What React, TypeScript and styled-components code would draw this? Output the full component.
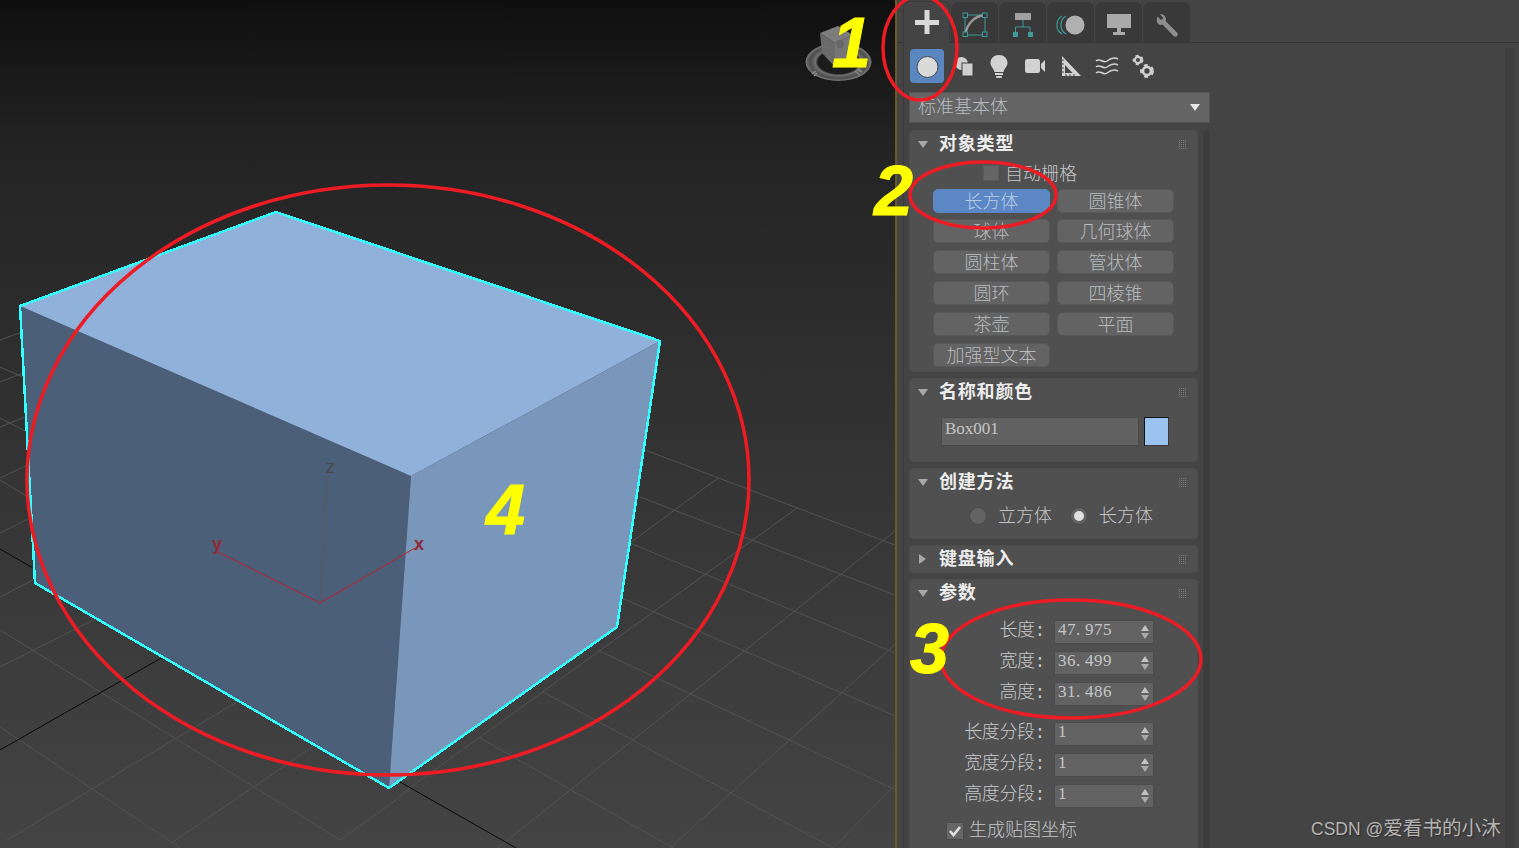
import React from "react";
import styled, { createGlobalStyle } from "styled-components";

const Global = createGlobalStyle`
  html, body { margin: 0; padding: 0; background: #444; overflow: hidden; }
  * { box-sizing: border-box; }
`;

const CJK = `"Noto Sans CJK SC", sans-serif`;
const MONO_CJK = `"Liberation Mono", "Noto Sans CJK SC", monospace`;
const DIGITS = `"Liberation Serif", serif`;

const Page = styled.div`
  position: relative;
  display: flex;
  width: 1519px;
  height: 848px;
  overflow: hidden;
  font-family: ${CJK};
  font-weight: 300;
`;

const Viewport = styled.div`
  flex: 0 0 895px;
  height: 848px;
`;
const ViewportCanvas = styled.svg`
  display: block;
`;

const CommandPanel = styled.div`
  flex: 1;
  display: flex;
  flex-direction: column;
  height: 848px;
  background: #444444;
  border-left: 2px solid #6b5a26;
`;

const TabBar = styled.div`
  display: flex;
  align-items: flex-end;
  gap: 1px;
  height: 43px;
  padding-left: 6px;
  border-bottom: 1px solid #373737;
`;
const Tab = styled.div<{ $active?: boolean }>`
  width: 47px;
  height: ${(p) => (p.$active ? "42px" : "40px")};
  margin-bottom: ${(p) => (p.$active ? "-1px" : "0")};
  border-radius: 7px 7px 0 0;
  background: ${(p) => (p.$active ? "#444444" : "#393939")};
  border: 1px solid ${(p) => (p.$active ? "#3a3a3a" : "transparent")};
  border-bottom: none;
`;
const TabGlyph = styled.svg`
  display: block;
  margin-left: -1px;
`;

const PanelBody = styled.div`
  flex: 1;
  display: flex;
  min-height: 0;
  margin-left: 6px;
  padding-left: 5px;
  border-left: 1px solid #3a3a3a;
`;
const PanelColumn = styled.div`
  display: flex;
  flex-direction: column;
  width: 301px;
`;
const OuterTrack = styled.div`
  width: 10px;
  margin: 5px 4px 0 auto;
  background: #3e3e3e;
`;

const CategoryRow = styled.div`
  display: flex;
  gap: 2px;
  height: 34px;
  margin: 6px 0 0 1px;
`;
const CategoryButton = styled.div<{ $active?: boolean }>`
  width: 34px;
  height: 34px;
  border-radius: 4px;
  background: ${(p) => (p.$active ? "#5b87c1" : "transparent")};
`;
const CategoryGlyph = styled.svg`
  display: block;
`;

const Dropdown = styled.div`
  display: flex;
  align-items: center;
  justify-content: space-between;
  height: 31px;
  margin-top: 9px;
  padding: 0 9px 6px 8px;
  background: #656565;
  border: 1px solid #545454;
  color: #b9bdc2;
  font-size: 18px;
`;
const DropdownArrow = styled.span`
  width: 0;
  height: 0;
  margin-top: 6px;
  border-left: 5px solid transparent;
  border-right: 5px solid transparent;
  border-top: 7px solid #e6e6e6;
`;

const RolloutArea = styled.div`
  flex: 1;
  display: flex;
  gap: 5px;
  min-height: 0;
  margin-top: 7px;
`;
const RolloutList = styled.div`
  display: flex;
  flex-direction: column;
  gap: 6px;
  width: 289px;
`;
const InnerTrack = styled.div`
  width: 7px;
  border-radius: 3px 3px 0 0;
  background: #3d3d3d;
`;

const Rollout = styled.section`
  background: #505050;
  border: 1px solid #4d4d4d;
  border-radius: 4px;
`;
const RolloutHeader = styled.header`
  display: flex;
  align-items: center;
  height: 26px;
  padding: 0 10px 0 8px;
`;
const Caret = styled.span<{ $open: boolean }>`
  width: 0;
  height: 0;
  ${(p) =>
    p.$open
      ? `border-left: 5px solid transparent; border-right: 5px solid transparent; border-top: 7px solid #a8a8a8; margin-right: 11px;`
      : `border-top: 5px solid transparent; border-bottom: 5px solid transparent; border-left: 7px solid #a8a8a8; margin: 0 13px 0 1px;`}
`;
const RolloutTitle = styled.h3`
  flex: 1;
  margin: 0 0 3px;
  color: #ececec;
  font-size: 18px;
  font-weight: 700;
  line-height: 23px;
  letter-spacing: 0.8px;
`;
const Grip = styled.span`
  width: 9px;
  height: 9px;
  background: conic-gradient(#7a7a7a 25%, transparent 0) 0 0 / 2px 2px;
`;

const AutoGridRow = styled.div`
  display: flex;
  align-items: center;
  gap: 6px;
  height: 16px;
  margin: 8px 0 0 73px;
  color: #c4c6c8;
  font-size: 18px;
`;
const AutoGridText = styled.span`
  margin-top: -2px;
`;
const SmallBox = styled.span`
  width: 16px;
  height: 16px;
  background: #656565;
  border: 1px solid #5a5a5a;
`;
const ButtonGrid = styled.div`
  display: grid;
  grid-template-columns: 117px 117px;
  grid-template-rows: 23px repeat(5, 24px);
  column-gap: 7px;
  row-gap: 7px;
  margin: 8px 0 4px 23px;
`;
const ObjectButton = styled.div<{ $active?: boolean }>`
  display: flex;
  align-items: center;
  justify-content: center;
  height: 24px;
  padding-bottom: 2px;
  border-radius: 5px;
  border: 1px solid ${(p) => (p.$active ? "#5b87c1" : "#585858")};
  background: ${(p) => (p.$active ? "#5b87c4" : "#636363")};
  color: ${(p) => (p.$active ? "#b9cce4" : "#b9bcbf")};
  font-size: 18px;
  line-height: 20px;
`;

const NameRow = styled.div`
  display: flex;
  gap: 5px;
  margin: 12px 0 15px 31px;
`;
const NameField = styled.div`
  width: 198px;
  height: 29px;
  padding: 0 3px;
  background: #616161;
  border: 1px solid #4a4a4a;
  color: #c6c6c6;
  font-family: ${DIGITS};
  font-size: 17px;
  line-height: 22px;
`;
const ColorSwatch = styled.div`
  width: 25px;
  height: 29px;
  background: #9cc3ef;
  border: 1px solid #3a3a3a;
  border-top-color: #111;
  border-left-color: #111;
`;

const RadioRow = styled.div`
  display: flex;
  align-items: center;
  height: 18px;
  margin: 12px 0 13px 59px;
`;
const RadioOption = styled.div`
  display: flex;
  align-items: center;
  gap: 11px;
  width: 101px;
  color: #c2c4c6;
  font-size: 18px;
`;
const RadioText = styled.span`
  margin-top: -5px;
`;
const RadioDot = styled.span<{ $checked?: boolean }>`
  display: flex;
  align-items: center;
  justify-content: center;
  width: 18px;
  height: 18px;
  border-radius: 50%;
  background: #636363;
  border: 1px solid #4a4a4a;
  &::after {
    content: "";
    width: 10px;
    height: 10px;
    border-radius: 50%;
    background: ${(p) => (p.$checked ? "#e0e0e0" : "transparent")};
  }
`;

const SpinnerGroup = styled.div<{ $first?: boolean }>`
  display: flex;
  flex-direction: column;
  gap: 7px;
  margin-top: ${(p) => (p.$first ? "14px" : "16px")};
`;
const SpinnerRow = styled.div`
  display: flex;
  align-items: center;
  justify-content: flex-end;
  gap: 9px;
  height: 24px;
  padding-right: 43px;
`;
const SpinnerLabel = styled.label`
  padding-bottom: 9px;
  color: #c6c8ca;
  font-family: ${MONO_CJK};
  font-size: 18px;
  letter-spacing: -0.4px;
  white-space: nowrap;
`;
const SpinnerField = styled.div`
  position: relative;
  width: 100px;
  height: 24px;
  padding-left: 3px;
  background: #626262;
  border: 1px solid #4c4c4c;
  color: #c4c6c8;
  font-family: ${DIGITS};
  font-size: 17px;
  line-height: 17px;
  letter-spacing: 0.5px;
`;
const DecimalPoint = styled.span`
  display: inline-block;
  width: 9px;
`;
const SpinnerArrows = styled.span`
  position: absolute;
  top: 4px;
  right: 4px;
  display: flex;
  flex-direction: column;
  gap: 2px;
`;
const SpinUp = styled.i`
  display: block;
  width: 0;
  height: 0;
  border-left: 4px solid transparent;
  border-right: 4px solid transparent;
  border-bottom: 6px solid #c2c2c2;
`;
const SpinDown = styled.i`
  display: block;
  width: 0;
  height: 0;
  border-left: 4px solid transparent;
  border-right: 4px solid transparent;
  border-top: 6px solid #a9a9a9;
`;
const MapRow = styled.div`
  display: flex;
  align-items: center;
  gap: 5px;
  height: 18px;
  margin: 14px 0 20px 36px;
  color: #c4c6c8;
  font-size: 18px;
`;
const MapText = styled.span`
  margin-top: -6px;
`;
const CheckBox = styled.span`
  display: flex;
  align-items: center;
  justify-content: center;
  width: 18px;
  height: 18px;
  background: #666;
  border: 1px solid #4a4a4a;
`;

/* overlays */
const MarkupLayer = styled.svg`
  position: absolute;
  top: 0;
  left: 0;
  pointer-events: none;
`;
const Callout = styled.span<{ $x: number; $y: number }>`
  position: absolute;
  left: ${(p) => p.$x}px;
  top: ${(p) => p.$y}px;
  color: #ffff00;
  font-family: "Liberation Sans", sans-serif;
  font-size: 70px;
  font-style: italic;
  font-weight: 700;
  line-height: 72px;
  -webkit-text-stroke: 1px #ffff00;
`;
const Watermark = styled.span`
  position: absolute;
  left: 1311px;
  top: 814px;
  color: #b4b4b4;
  font-family: "Liberation Sans", "Noto Sans CJK SC", sans-serif;
  font-size: 19.6px;
  font-weight: 400;
  line-height: 28px;
  text-shadow: 1px 1px 1px #2c2c2c;
  white-space: nowrap;
`;
const WatermarkLatin = styled.span`
  font-size: 17.5px;
`;

const gridLines: number[][] = [
  // right, down-right family
  [617, 596, 900, 718], [630, 543, 900, 655], [640, 497, 900, 597], [645, 450, 900, 547],
  [597, 650, 900, 792], [543, 692, 833, 848], [480, 738, 673, 848],
  // right, up-right family
  [490, 854, 900, 527], [400, 795, 797, 508], [630, 543, 718, 478],
  [670, 848, 900, 640], [833, 848, 900, 780],
  // left
  [0, 340, 22, 332], [0, 367, 23, 377], [0, 382, 23, 373], [0, 418, 27, 432], [0, 427, 25, 417],
  [0, 478, 28, 465], [0, 480, 28, 497], [0, 533, 30, 518], [0, 597, 33, 580],
  [0, 630, 340, 840], [0, 727, 180, 848], [7, 840, 320, 652], [173, 842, 410, 680], [0, 667, 97, 618],
  [340, 840, 410, 790],
];
const blackLines: number[][] = [
  [0, 549, 33, 568], [163, 657, 0, 750], [400, 782, 516, 848],
];

const topFace = "20,306 276,212 660,341 411,476";
const leftFace = "20,306 411,476 389,788 35,583";
const rightFace = "411,476 660,341 617,627 389,788";
const outline = "20,306 276,212 660,341 617,627 389,788 35,583";

const ViewScene = () => (
  <ViewportCanvas width={895} height={848} viewBox="0 0 895 848">
    <defs>
      <linearGradient id="vpBg" x1="0" y1="0" x2="0" y2="1">
        <stop offset="0" stopColor="#0f0f0f" />
        <stop offset="0.18" stopColor="#242424" />
        <stop offset="0.6" stopColor="#363636" />
        <stop offset="1" stopColor="#444444" />
      </linearGradient>
      <radialGradient id="cubeRing" cx="0.5" cy="0.5" r="0.5">
        <stop offset="0.62" stopColor="#1c1c1c" />
        <stop offset="0.7" stopColor="#707070" />
        <stop offset="0.86" stopColor="#4c4c4c" />
        <stop offset="1" stopColor="#7a7a7a" />
      </radialGradient>
    </defs>
    <rect width="895" height="848" fill="url(#vpBg)" />
    {gridLines.map((l, i) => (
      <line key={i} x1={l[0]} y1={l[1]} x2={l[2]} y2={l[3]} stroke="#525252" strokeWidth="1" />
    ))}
    {blackLines.map((l, i) => (
      <line key={i} x1={l[0]} y1={l[1]} x2={l[2]} y2={l[3]} stroke="#0a0a0a" strokeWidth="1" />
    ))}
    <polygon points={leftFace} fill="#4b5f78" />
    <polygon points={rightFace} fill="#7897bb" />
    <polygon points={topFace} fill="#8fb1da" />
    <polygon points={outline} fill="none" stroke="#33ffff" strokeWidth="2.5" strokeLinejoin="miter" shapeRendering="crispEdges" />
    <line x1="320" y1="603" x2="327" y2="475" stroke="#5a5a5a" strokeWidth="1" />
    <line x1="320" y1="603" x2="218" y2="552" stroke="#c0222a" strokeWidth="1" />
    <line x1="320" y1="603" x2="415" y2="548" stroke="#c0222a" strokeWidth="1" />
    <text x="326" y="473" fontFamily="Liberation Sans" fontSize="18" fill="#4a4a4a">z</text>
    <text x="212" y="550" fontFamily="Liberation Sans" fontSize="18" fontWeight="700" fill="#8e2a35">y</text>
    <text x="414" y="550" fontFamily="Liberation Sans" fontSize="18" fontWeight="700" fill="#8e2a35">x</text>
    {/* view cube */}
    <ellipse cx="838.5" cy="62" rx="33" ry="19" fill="url(#cubeRing)" />
    <polygon points="820,33 838,26 853,35 835,43" fill="#7c7c7c" />
    <polygon points="820,33 835,43 835,67 822,53" fill="#6a6a6a" />
    <polygon points="835,43 853,35 848,57 835,67" fill="#767676" />
    <circle cx="840" cy="44" r="4" fill="#666" />
    <path d="M812 74l4-3m-2 5l3-3m38-2l5 4m-3-6l5 3" stroke="#8a8a8a" strokeWidth="1.5" fill="none" />
  </ViewportCanvas>
);

const TEAL = "#3f9a9a";

const tabIcons: React.ReactNode[] = [
  <g key="create" fill="#d9d9d9">
    <rect x="12" y="18" width="24" height="5" />
    <rect x="21.5" y="8" width="5" height="24" />
  </g>,
  <g key="modify">
    <path d="M14 12H34V32H14Z" fill="none" stroke={TEAL} strokeWidth="1" />
    <path d="M14 32C16 21 23 13 34 12" fill="none" stroke="#9a9a9a" strokeWidth="2.5" />
    {[[12, 10], [31.5, 10], [12, 29], [31.5, 29]].map(([x, y]) => (
      <rect key={`${x}${y}`} x={x} y={y} width="4.5" height="4.5" fill="#393939" stroke={TEAL} />
    ))}
  </g>,
  <g key="hierarchy">
    <rect x="16" y="10" width="16" height="7" fill="#a0a0a0" />
    <path d="M24 17V24M16.5 30V24H31V30" fill="none" stroke={TEAL} strokeWidth="1" />
    <rect x="14" y="29" width="5" height="5" fill={TEAL} />
    <rect x="29" y="29" width="5" height="5" fill={TEAL} />
  </g>,
  <g key="motion">
    <path d="M15 13A10.5 10.5 0 0 0 15 31" fill="none" stroke={TEAL} strokeWidth="1.2" />
    <path d="M19 13A10.5 10.5 0 0 0 19 31" fill="none" stroke={TEAL} strokeWidth="1.2" />
    <circle cx="28" cy="22" r="9.5" fill="#b0b0b0" />
  </g>,
  <g key="display" fill="#a9a9a9">
    <rect x="12" y="11" width="24" height="14" />
    <rect x="22" y="25" width="4" height="4" />
    <rect x="18" y="29" width="12" height="3" />
  </g>,
  <g key="utilities" transform="translate(12 10)">
    <path
      fill="#8e8e8e"
      d="M2.5 3.5L6 7L8.5 5L5 1.5C8 0.8 11 3 11 6.5L10.5 8L22 19.5C23 20.5 23 22 22 23C21 24 19.5 24 18.5 23L7.5 11.5L6 12C2.5 12 .6 8 2.5 3.5Z"
    />
  </g>,
];

const Gear = ({ cx, cy, r }: { cx: number; cy: number; r: number }) => (
  <g fill="none" stroke="#cfcfcf">
    <circle cx={cx} cy={cy} r={r * 0.62} strokeWidth={r * 0.42} />
    <circle cx={cx} cy={cy} r={r * 0.92} strokeWidth={r * 0.3} strokeDasharray={`${r * 0.62} ${r * 0.62}`} />
  </g>
);

const categoryIcons: React.ReactNode[] = [
  <circle key="geo" cx="17.5" cy="18" r="10.5" fill="#dadada" stroke="#3f4a58" strokeWidth="1" />,
  <g key="shape">
    <circle cx="15.5" cy="14.5" r="6.5" fill="#cfcfcf" />
    <rect x="16" y="14" width="11" height="13" fill="#cfcfcf" stroke="#3f3f3f" strokeWidth="1" />
  </g>,
  <g key="light" fill="#d2d2d2">
    <path d="M17 6C12 6 8.500 9.500 8.500 14C8.500 17.500 11.500 19 12.500 23H21.500C22.500 19 25.500 17.500 25.500 14C25.500 9.500 22 6 17 6Z" />
    <rect x="13" y="24" width="8" height="2" />
    <rect x="14" y="27" width="6" height="2" rx="1" />
  </g>,
  <g key="camera" fill="#d2d2d2">
    <rect x="7" y="10" width="15" height="14" rx="2.500" />
    <path d="M23 15L27 11V23L23 19Z" />
  </g>,
  <g key="helper">
    <path fillRule="evenodd" fill="#d2d2d2" d="M8 7L27 27H8ZM11 16V24H18.500Z" />
    <path d="M8 11h2M8 15h2M8 19h2M8 23h2M12 27v-2M16 27v-2M20 27v-2" stroke="#444" strokeWidth="1" />
  </g>,
  <g key="warp" fill="none" stroke="#d2d2d2" strokeWidth="1.500">
    <path d="M6 12C10 8 13 15 17 12S24 8 28 10" />
    <path d="M6 18C10 14 13 21 17 18S24 14 28 16" />
    <path d="M6 24C10 20 13 27 17 24S24 20 28 22" />
  </g>,
  <g key="system">
    <Gear cx={12} cy={11} r={5} />
    <Gear cx={21} cy={22} r={6.500} />
  </g>,
];

const objectTypes = ["长方体", "圆锥体", "球体", "几何球体", "圆柱体", "管状体", "圆环", "四棱锥", "茶壶", "平面", "加强型文本"];

const sizeSpinners = [
  ["长度:", "47.975"],
  ["宽度:", "36.499"],
  ["高度:", "31.486"],
];
const segmentSpinners = [
  ["长度分段:", "1"],
  ["宽度分段:", "1"],
  ["高度分段:", "1"],
];

const Head = ({ title, open = true }: { title: string; open?: boolean }) => (
  <RolloutHeader>
    <Caret $open={open} />
    <RolloutTitle>{title}</RolloutTitle>
    <Grip />
  </RolloutHeader>
);

const Spinner = ({ label, value }: { label: string; value: string }) => {
  const [whole, fraction] = value.split(".");
  return (
    <SpinnerRow>
      <SpinnerLabel>{label}</SpinnerLabel>
      <SpinnerField>
        {whole}
        {fraction !== undefined && (
          <>
            <DecimalPoint>.</DecimalPoint>
            {fraction}
          </>
        )}
        <SpinnerArrows>
          <SpinUp />
          <SpinDown />
        </SpinnerArrows>
      </SpinnerField>
    </SpinnerRow>
  );
};

export default function App() {
  return (
    <Page>
      <Global />
      <Viewport>
        <ViewScene />
      </Viewport>
      <CommandPanel>
        <TabBar>
          {tabIcons.map((icon, i) => (
            <Tab key={i} $active={i === 0}>
              <TabGlyph width="47" height="40" viewBox="0 0 47 40">{icon}</TabGlyph>
            </Tab>
          ))}
        </TabBar>
        <PanelBody>
          <PanelColumn>
            <CategoryRow>
              {categoryIcons.map((icon, i) => (
                <CategoryButton key={i} $active={i === 0}>
                  <CategoryGlyph width="34" height="34" viewBox="0 0 34 34">{icon}</CategoryGlyph>
                </CategoryButton>
              ))}
            </CategoryRow>
            <Dropdown>
              标准基本体
              <DropdownArrow />
            </Dropdown>
            <RolloutArea>
              <RolloutList>
                <Rollout>
                  <Head title="对象类型" />
                  <AutoGridRow>
                    <SmallBox />
                    <AutoGridText>自动栅格</AutoGridText>
                  </AutoGridRow>
                  <ButtonGrid>
                    {objectTypes.map((t, i) => (
                      <ObjectButton key={t} $active={i === 0}>{t}</ObjectButton>
                    ))}
                  </ButtonGrid>
                </Rollout>
                <Rollout>
                  <Head title="名称和颜色" />
                  <NameRow>
                    <NameField>Box001</NameField>
                    <ColorSwatch />
                  </NameRow>
                </Rollout>
                <Rollout>
                  <Head title="创建方法" />
                  <RadioRow>
                    <RadioOption>
                      <RadioDot />
                      <RadioText>立方体</RadioText>
                    </RadioOption>
                    <RadioOption>
                      <RadioDot $checked />
                      <RadioText>长方体</RadioText>
                    </RadioOption>
                  </RadioRow>
                </Rollout>
                <Rollout>
                  <Head title="键盘输入" open={false} />
                </Rollout>
                <Rollout>
                  <Head title="参数" />
                  <SpinnerGroup $first>
                    {sizeSpinners.map(([l, v]) => (
                      <Spinner key={l} label={l} value={v} />
                    ))}
                  </SpinnerGroup>
                  <SpinnerGroup>
                    {segmentSpinners.map(([l, v]) => (
                      <Spinner key={l} label={l} value={v} />
                    ))}
                  </SpinnerGroup>
                  <MapRow>
                    <CheckBox>
                      <svg width="14" height="14" viewBox="0 0 14 14">
                        <path d="M2 7L5.500 11L12 3" fill="none" stroke="#e2e2e2" strokeWidth="2.500" />
                      </svg>
                    </CheckBox>
                    <MapText>生成贴图坐标</MapText>
                  </MapRow>
                </Rollout>
              </RolloutList>
              <InnerTrack />
            </RolloutArea>
          </PanelColumn>
          <OuterTrack />
        </PanelBody>
      </CommandPanel>

      <MarkupLayer width={1519} height={848} viewBox="0 0 1519 848">
        <g fill="none" stroke="#ed1c24" strokeWidth="3.5">
          <ellipse cx="388" cy="480" rx="361" ry="295" />
          <ellipse cx="920" cy="48" rx="37" ry="52" />
          <ellipse cx="983" cy="195" rx="73" ry="33" />
          <ellipse cx="1071" cy="659" rx="130" ry="59" />
        </g>
      </MarkupLayer>
      <Callout $x={832} $y={7}>1</Callout>
      <Callout $x={874} $y={155}>2</Callout>
      <Callout $x={910} $y={613}>3</Callout>
      <Callout $x={486} $y={474}>4</Callout>
      <Watermark>
        <WatermarkLatin>CSDN @</WatermarkLatin>爱看书的小沐
      </Watermark>
    </Page>
  );
}
